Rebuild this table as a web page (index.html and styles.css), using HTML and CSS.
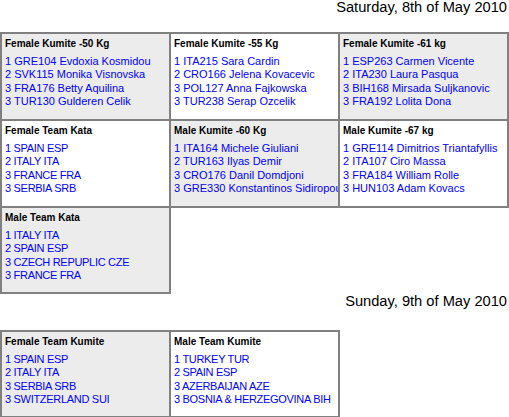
FILE: index.html
```html
<!DOCTYPE html>
<html>
<head>
<meta charset="utf-8">
<link rel="stylesheet" href="styles.css">
</head>
<body>
<div class="day day-first">Saturday, 8th of May 2010</div>
<div class="board three">
  <div class="cat gray">
    <div class="title">Female Kumite -50 Kg</div>
    <ul class="res"><li>1 GRE104 Evdoxia Kosmidou</li><li>2 SVK115 Monika Visnovska</li><li>3 FRA176 Betty Aquilina</li><li>3 TUR130 Gulderen Celik</li></ul>
  </div>
  <div class="cat">
    <div class="title">Female Kumite -55 Kg</div>
    <ul class="res"><li>1 ITA215 Sara Cardin</li><li>2 CRO166 Jelena Kovacevic</li><li>3 POL127 Anna Fajkowska</li><li>3 TUR238 Serap Ozcelik</li></ul>
  </div>
  <div class="cat gray">
    <div class="title">Female Kumite -61 kg</div>
    <ul class="res"><li>1 ESP263 Carmen Vicente</li><li>2 ITA230 Laura Pasqua</li><li>3 BIH168 Mirsada Suljkanovic</li><li>3 FRA192 Lolita Dona</li></ul>
  </div>
  <div class="cat">
    <div class="title">Female Team Kata</div>
    <ul class="res teams"><li>1 SPAIN ESP</li><li>2 ITALY ITA</li><li>3 FRANCE FRA</li><li>3 SERBIA SRB</li></ul>
  </div>
  <div class="cat gray">
    <div class="title">Male Kumite -60 Kg</div>
    <ul class="res"><li>1 ITA164 Michele Giuliani</li><li>2 TUR163 Ilyas Demir</li><li>3 CRO176 Danil Domdjoni</li><li>3 GRE330 Konstantinos Sidiropoulos</li></ul>
  </div>
  <div class="cat">
    <div class="title">Male Kumite -67 kg</div>
    <ul class="res"><li>1 GRE114 Dimitrios Triantafyllis</li><li>2 ITA107 Ciro Massa</li><li>3 FRA184 William Rolle</li><li>3 HUN103 Adam Kovacs</li></ul>
  </div>
  <div class="cat gray">
    <div class="title">Male Team Kata</div>
    <ul class="res teams"><li>1 ITALY ITA</li><li>2 SPAIN ESP</li><li>3 CZECH REPUPLIC CZE</li><li>3 FRANCE FRA</li></ul>
  </div>
</div>
<div class="day day-second">Sunday, 9th of May 2010</div>
<div class="board two">
  <div class="cat gray">
    <div class="title">Female Team Kumite</div>
    <ul class="res teams"><li>1 SPAIN ESP</li><li>2 ITALY ITA</li><li>3 SERBIA SRB</li><li>3 SWITZERLAND SUI</li></ul>
  </div>
  <div class="cat">
    <div class="title">Male Team Kumite</div>
    <ul class="res teams"><li>1 TURKEY TUR</li><li>2 SPAIN ESP</li><li>3 AZERBAIJAN AZE</li><li>3 BOSNIA &amp; HERZEGOVINA BIH</li></ul>
  </div>
</div>
</body>
</html>
```
FILE: styles.css
```css
html, body {
  margin: 0;
  padding: 0;
  background: #ffffff;
  font-family: "Liberation Sans", Arial, sans-serif;
  color: #000000;
}

.day {
  font-size: 11pt;
  line-height: 15px;
  text-align: right;
  padding-right: 2px;
}

.day-first {
  height: 32px;
}

.day-second {
  height: 15px;
  margin-bottom: 21px;
}

.board {
  display: grid;
  padding-right: 2px;
  padding-bottom: 2px;
}

.three {
  grid-template-columns: repeat(3, 169px);
  grid-template-rows: 87px 87px 86px;
}

.two {
  grid-template-columns: repeat(2, 169px);
  grid-template-rows: 86px;
}

.cat {
  border: 2px solid #808080;
  margin: 0 -2px -2px 0;
  padding: 4px 3px 0 3px;
  background: #ffffff;
  white-space: nowrap;
  overflow: hidden;
}

.gray {
  background: #ececec;
}

.title {
  font-weight: bold;
  font-size: 10px;
  line-height: 12px;
}

.res {
  list-style: none;
  margin: 5px 0 0 0;
  padding: 0;
  font-size: 11px;
  line-height: 13.4px;
  color: #0000ff;
}

.teams {
  letter-spacing: -0.3px;
}
```
